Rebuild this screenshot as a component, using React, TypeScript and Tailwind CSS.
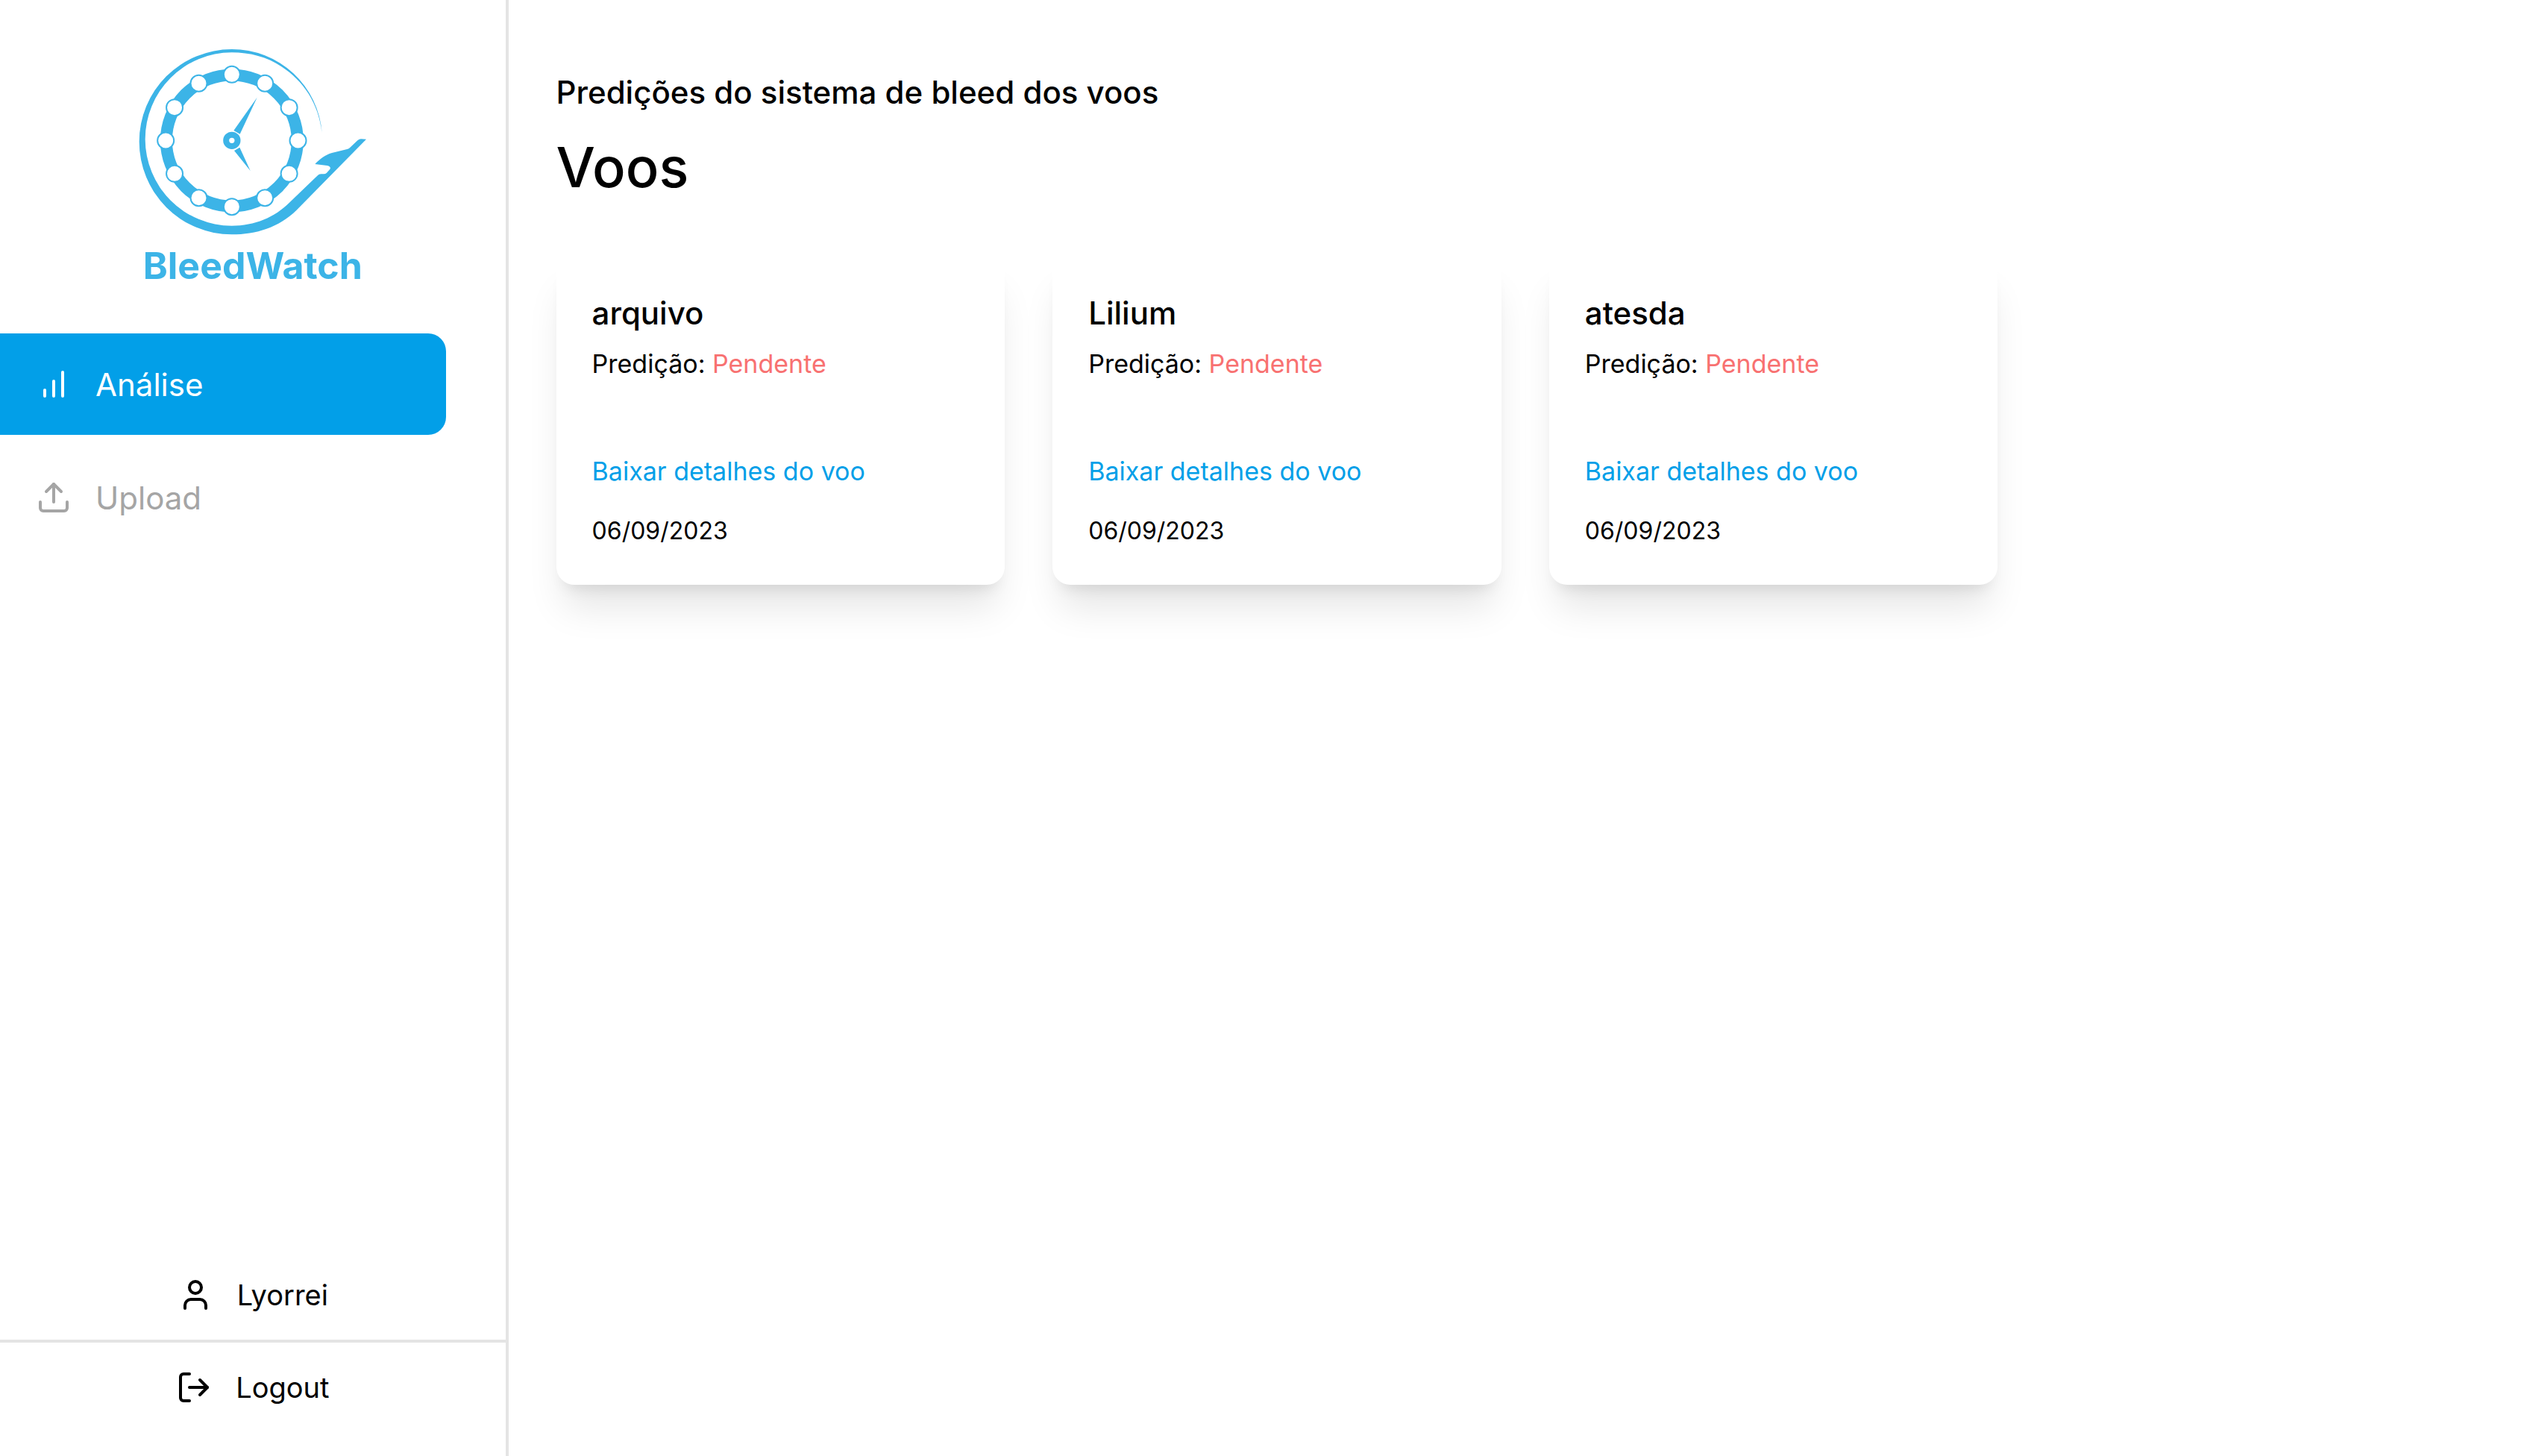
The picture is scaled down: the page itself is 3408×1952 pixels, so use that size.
import { FiBarChart, FiUpload } from "react-icons/fi";
import { LogOut, User } from "lucide-react";

const BLUE = "#3cb4e7";

const flights = [
  { name: "arquivo", status: "Pendente", date: "06/09/2023" },
  { name: "Lilium", status: "Pendente", date: "06/09/2023" },
  { name: "atesda", status: "Pendente", date: "06/09/2023" },
];

const hours = Array.from({ length: 12 }, (_, i) => {
  const angle = (i * Math.PI) / 6;
  return { x: 452.5 + 266 * Math.sin(angle), y: 442.5 - 266 * Math.cos(angle) };
});

function ClockPlane() {
  return (
    <svg viewBox="78 72 918 750" className="h-[250px] w-[306px]" aria-hidden="true">
      <path
        fill={BLUE}
        d="M815 412A363 363 0 0 0 452 75A372 372 0 0 0 80 447A372 373 0 0 0 452 820C552 820 640 792 712 723L993 437L972 436Q965 436 958 442L928 470Q923 475 916 477L855 492C828 500 808 515 787 537L836 543C847 545 852 552 846 559L834 572Q829 577 822 577L811 577Q803 577 796 584L686 690C624 752 545 785 452 785A348 349 0 0 1 104 437A348 349 0 0 1 452 88C525 88 595 106 652 145C739 202 801 290 815 412Z"
      />
      <circle cx="452.5" cy="442.5" r="264" fill="none" stroke={BLUE} strokeWidth="48" />
      {hours.map(({ x, y }, i) => (
        <circle key={i} cx={x} cy={y} r="33" fill="#fff" stroke={BLUE} strokeWidth="6" />
      ))}
      <path fill={BLUE} d="M554 269L460 402L485 416ZM527 564L462 483L484 470Z" />
      <circle cx="452.5" cy="442" r="23" fill="none" stroke={BLUE} strokeWidth="24" />
    </svg>
  );
}

export default function App() {
  return (
    <div className="flex min-h-screen bg-white font-['Inter',sans-serif] text-black">
      <aside className="flex w-1/5 shrink-0 flex-col border-r-4 border-[#e4e4e4]">
        <div className="flex flex-col items-center pt-[65px]">
          <ClockPlane />
          <span className="mt-2 text-[50px] leading-[66px] font-bold text-[#3cb4e7]">BleedWatch</span>
        </div>
        <nav className="mt-[58px] flex flex-col gap-4 pr-20">
          <a href="#analise" className="flex h-[136px] items-center gap-8 rounded-r-3xl bg-[#029fe8] pl-12 text-[42px] text-white">
            <FiBarChart size={48} />
            Análise
          </a>
          <a href="#upload" className="flex h-[136px] items-center gap-8 rounded-r-3xl pl-12 text-[42px] text-[#a5a5a5]">
            <FiUpload size={48} />
            Upload
          </a>
        </nav>
        <div className="mt-auto text-[38px] leading-[56px]">
          <div className="flex items-center justify-center gap-8 border-b-4 border-[#e4e4e4] py-8">
            <User size={48} />
            Lyorrei
          </div>
          <button type="button" className="flex w-full items-center justify-center gap-8 pt-8 pb-16">
            <LogOut size={48} />
            Logout
          </button>
        </div>
      </aside>
      <main className="flex-1 px-16 pt-24">
        <p className="text-[42px] leading-[56px] font-medium">Predições do sistema de bleed dos voos</p>
        <h1 className="mt-8 text-[74px] leading-[80px] font-medium">Voos</h1>
        <div className="mt-20 grid grid-cols-4 gap-16">
          {flights.map((flight) => (
            <article
              key={flight.name}
              className="rounded-3xl bg-white p-12 text-[34px] leading-[48px] shadow-[0_40px_50px_-10px_rgb(0_0_0/0.1),0_16px_20px_-12px_rgb(0_0_0/0.1)]"
            >
              <h2 className="text-[42px] leading-[56px] font-medium">{flight.name}</h2>
              <p className="mt-4">
                Predição: <span className="text-[#f87171]">{flight.status}</span>
              </p>
              <a href="#download" className="mt-24 block text-[#029fe8]">
                Baixar detalhes do voo
              </a>
              <p className="mt-8 text-[32px] leading-[48px]">{flight.date}</p>
            </article>
          ))}
        </div>
      </main>
    </div>
  );
}
